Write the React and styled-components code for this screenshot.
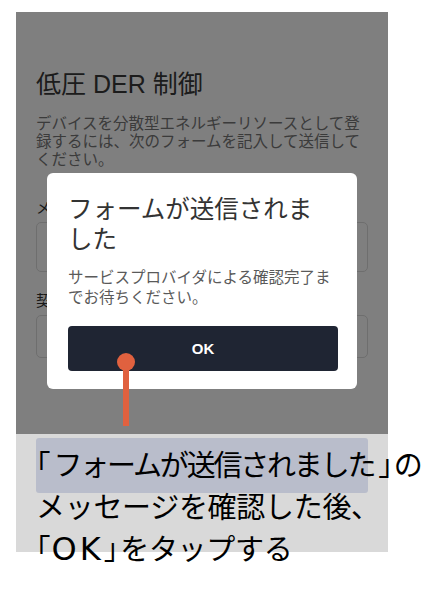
import React from "react";
import styled, { createGlobalStyle } from "styled-components";

const Global = createGlobalStyle`
  html, body { margin: 0; padding: 0; background: #ffffff; }
  body { min-height: 100vh; font-family: "Liberation Sans", "Noto Sans CJK JP", sans-serif; }
`;

const Frame = styled.div`
  margin: 12px 0 0 16px;
  padding-bottom: 46px;
  width: 372px;
`;

const Screen = styled.div`
  position: relative;
  height: 422px;
  background: #ffffff;
  overflow: hidden;
`;

const Form = styled.div`
  display: flex;
  flex-direction: column;
  padding: 56px 20px 0;
`;

const Title = styled.h1`
  margin: 0;
  font-family: "Liberation Sans", "Noto Sans CJK JP", sans-serif;
  font-weight: 400;
  font-size: 25px;
  line-height: 32px;
  color: #383838;
`;

const Description = styled.p`
  margin: 13px 0 0;
  font-family: "Noto Sans CJK JP", sans-serif;
  font-size: 15.5px;
  line-height: 18px;
  color: #767676;
  white-space: nowrap;
`;

const Label = styled.div`
  margin-top: ${(p) => p.$mt}px;
  font-family: "Noto Sans CJK JP", sans-serif;
  font-size: 15px;
  line-height: 20px;
  color: #333333;
`;

const Input = styled.div`
  margin-top: 5px;
  height: ${(p) => p.$h}px;
  box-sizing: border-box;
  border: 1px solid #dcdcdc;
  border-radius: 5px;
  background: #ffffff;
`;

const Overlay = styled.div`
  position: absolute;
  inset: 0;
  background: rgba(0, 0, 0, 0.5);
`;

const Dialog = styled.div`
  position: absolute;
  left: 31px;
  top: 161px;
  width: 310px;
  box-sizing: border-box;
  padding: 20px 20px 18px 21px;
  background: #ffffff;
  border-radius: 6px;
  display: flex;
  flex-direction: column;
`;

const DialogTitle = styled.h2`
  margin: 0;
  font-family: "Noto Sans CJK JP", sans-serif;
  font-weight: 400;
  font-size: 24.5px;
  line-height: 30px;
  color: #333333;
  white-space: nowrap;
`;

const DialogText = styled.p`
  margin: 13px 0 0;
  font-family: "Noto Sans CJK JP", sans-serif;
  font-size: 15.5px;
  line-height: 20px;
  color: #5a5a5a;
  white-space: nowrap;
`;

const OkButton = styled.button`
  margin-top: 20px;
  height: 45px;
  width: 270px;
  border: none;
  border-radius: 4px;
  background: #1f2533;
  color: #ffffff;
  font-family: "Liberation Sans", sans-serif;
  font-weight: 700;
  font-size: 15px;
  cursor: pointer;
`;

const Pointer = styled.div`
  position: absolute;
  left: 101px;
  top: 341px;
  width: 18px;
  display: flex;
  flex-direction: column;
  align-items: center;
`;

const Dot = styled.div`
  width: 18px;
  height: 18px;
  border-radius: 50%;
  background: #e0613f;
`;

const Stem = styled.div`
  width: 6px;
  height: 56px;
  margin-top: -1px;
  background: #e0613f;
`;

const Caption = styled.div`
  position: relative;
  height: 118px;
  box-sizing: border-box;
  padding: 8px 0 0 20px;
  background: #d9d9d9;
`;

const Highlight = styled.div`
  position: absolute;
  left: 20px;
  top: 4px;
  width: 332px;
  height: 55px;
  border-radius: 3px;
  background: #b9bdcb;
`;

const CaptionText = styled.div`
  position: relative;
  font-family: "Noto Sans CJK JP", sans-serif;
  font-size: 29px;
  line-height: 42px;
  letter-spacing: -0.3px;
  color: #000000;
  white-space: nowrap;
`;

const Tight = styled.span`
  letter-spacing: -2.2px;
`;

const Latin = styled.span`
  font-family: "DejaVu Sans", sans-serif;
  font-size: 32px;
  letter-spacing: 3px;
`;

const Bracket = styled.span`
  font-feature-settings: "halt" 1;
  letter-spacing: 0;
  margin: ${(p) => (p.$close ? `0 ${p.$mr ?? 2}px 0 ${p.$ml ?? 3}px` : `0 ${p.$mr ?? 2}px 0 0`)};
`;

export default function App() {
  return (
    <>
      <Global />
      <Frame>
        <Screen>
          <Form>
            <Title>低圧 DER 制御</Title>
            <Description>
              デバイスを分散型エネルギーリソースとして登
              <br />
              録するには、次のフォームを記入して送信して
              <br />
              ください。
            </Description>
            <Label $mt={30}>メールアドレス</Label>
            <Input $h={50} />
            <Label $mt={18}>契約番号</Label>
            <Input $h={43} />
          </Form>
          <Overlay />
          <Dialog>
            <DialogTitle>
              フォームが送信されま
              <br />
              した
            </DialogTitle>
            <DialogText>
              サービスプロバイダによる確認完了ま
              <br />
              でお待ちください。
            </DialogText>
            <OkButton>OK</OkButton>
          </Dialog>
          <Pointer>
            <Dot />
            <Stem />
          </Pointer>
        </Screen>
        <Caption>
          <Highlight />
          <CaptionText>
            <Bracket $mr={3}>「</Bracket>
            <Tight>フォームが送信されました</Tight>
            <Bracket $close $ml={4} $mr={1}>」</Bracket>の
            <br />
            メッセージを確認した後、
            <br />
            <Bracket $mr={1}>「</Bracket>
            <Latin>OK</Latin>
            <Bracket $close $ml={0} $mr={2}>」</Bracket>をタップする
          </CaptionText>
        </Caption>
      </Frame>
    </>
  );
}
